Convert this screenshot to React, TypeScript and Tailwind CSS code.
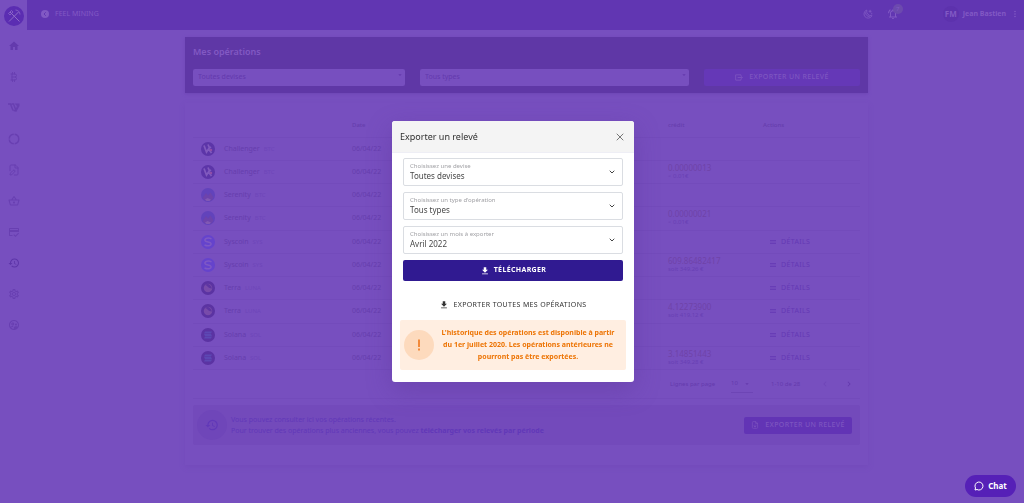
import {
  MdHome, MdOutlineShoppingBasket, MdOutlineCreditScore, MdHistory, MdOutlineSettings,
  MdMoreVert, MdOutlineNotificationsActive, MdDownload, MdMenu, MdArrowDropDown,
  MdChevronLeft, MdChevronRight, MdOutlineSupervisedUserCircle,
} from "react-icons/md";
import { TbCurrencyBitcoin } from "react-icons/tb";
import { ChevronDown, FileDown, FilePen, X } from "lucide-react";

type Coin = "challenger" | "serenity" | "syscoin" | "terra" | "solana";

type Operation = {
  coin: Coin;
  name: string;
  symbol: string;
  amount?: string;
  value?: string;
  details: boolean;
};

const operations: Operation[] = [
  { coin: "challenger", name: "Challenger", symbol: "BTC", details: false },
  { coin: "challenger", name: "Challenger", symbol: "BTC", amount: "0.00000013", value: "< 0.01€", details: false },
  { coin: "serenity", name: "Serenity", symbol: "BTC", details: false },
  { coin: "serenity", name: "Serenity", symbol: "BTC", amount: "0.00000021", value: "< 0.01€", details: false },
  { coin: "syscoin", name: "Syscoin", symbol: "SYS", details: true },
  { coin: "syscoin", name: "Syscoin", symbol: "SYS", amount: "609.86482417", value: "soit 349.26 €", details: true },
  { coin: "terra", name: "Terra", symbol: "LUNA", details: true },
  { coin: "terra", name: "Terra", symbol: "LUNA", amount: "4.12273900", value: "soit 419.12 €", details: true },
  { coin: "solana", name: "Solana", symbol: "SOL", details: true },
  { coin: "solana", name: "Solana", symbol: "SOL", amount: "3.14851443", value: "soit 349.28 €", details: true },
];

function CoinIcon({ coin }: { coin: Coin }) {
  return (
    <svg viewBox="0 0 28 28" className="size-3.5 shrink-0" aria-hidden="true">
      {coin === "challenger" && (
        <>
          <circle cx="14" cy="14" r="14" fill="#5c35a8" />
          <path d="M6 7l5 13 4-6 6 8M14 5l3 7 3-2" fill="none" stroke="#8059be" strokeWidth="3.500" />
          <circle cx="20" cy="16" r="2.500" fill="#904fa8" />
        </>
      )}
      {coin === "serenity" && (
        <>
          <circle cx="14" cy="14" r="14" fill="#6243bb" />
          <path d="M3 20l7-10 4 5 5-6 6 10-4 6H8z" fill="#6d43ac" />
          <path d="M8 23l5-3 7 3-3 3h-6z" fill="#8159b4" />
        </>
      )}
      {coin === "syscoin" && (
        <>
          <circle cx="14" cy="14" r="14" fill="#6543cc" />
          <path d="M21 8c-6-4-14-1-13 3 1 4 11 2 12 6 1 5-7 6-13 3" fill="none" stroke="#7e58c6" strokeWidth="3" />
        </>
      )}
      {coin === "terra" && (
        <>
          <circle cx="14" cy="14" r="14" fill="#5b33a2" />
          <circle cx="14" cy="14" r="8.500" fill="#784baa" />
          <path d="M8 8c5 0 4 6 14 7-3-8-8-11-14-7z" fill="#5e35a2" />
        </>
      )}
      {coin === "solana" && (
        <>
          <circle cx="14" cy="14" r="14" fill="#5b33a3" />
          <path d="M8 7h14l-2 4H6zM6 12h14l2 4H8zM8 17h14l-2 4H6z" fill="#5d48b4" />
        </>
      )}
    </svg>
  );
}

function VLogo() {
  return (
    <svg viewBox="0 0 24 18" className="h-[9px] w-3" aria-hidden="true">
      <path d="M0 2h5l5 13M7 2h4l5 13h-5" fill="none" stroke="currentColor" strokeWidth="3" />
      <path d="M13 1h10v5l-6 11h-4l5-11z" fill="currentColor" />
    </svg>
  );
}

function Ring() {
  return (
    <svg viewBox="0 0 24 24" className="size-3" fill="none" stroke="currentColor" strokeWidth="3" aria-hidden="true">
      <circle cx="12" cy="12" r="9.500" strokeDasharray="13 2" />
    </svg>
  );
}

const navItems = [
  { label: "Accueil", icon: <MdHome className="size-3 text-[#633aad]" /> },
  { label: "Bitcoin", icon: <TbCurrencyBitcoin className="size-3" /> },
  { label: "Valeurs", icon: <VLogo /> },
  { label: "Staking", icon: <Ring /> },
  { label: "Documents", icon: <FilePen className="size-3" /> },
  { label: "Boutique", icon: <MdOutlineShoppingBasket className="size-3" /> },
  { label: "Paiements", icon: <MdOutlineCreditScore className="size-3" /> },
  { label: "Historique", icon: <MdHistory className="size-3 text-[#5d35a8]" /> },
  { label: "Paramètres", icon: <MdOutlineSettings className="size-3" /> },
  { label: "Parrainage", icon: <MdOutlineSupervisedUserCircle className="size-3" /> },
];

function Sidebar() {
  return (
    <aside className="flex w-[27px] shrink-0 flex-col items-center pt-1.5">
      <a href="#" aria-label="Feel Mining" className="mb-1 size-5">
        <svg viewBox="0 0 40 40" className="size-5" fill="none" aria-hidden="true">
          <circle cx="20" cy="20" r="20" fill="#5b2db2" />
          <path d="M12 12l19 19M29 12L10 31" stroke="#8f6bc9" strokeWidth="2" />
          <path d="M9 15l6-6 3 3-6 6zM23 8c5 0 9 4 9 9" stroke="#8f6bc9" strokeWidth="1.500" />
        </svg>
      </a>
      <nav className="flex flex-col text-[#683fb1]">
        {navItems.map((item) => (
          <a key={item.label} href="#" aria-label={item.label} className="flex h-[31px] w-6 items-center justify-center">
            {item.icon}
          </a>
        ))}
      </nav>
    </aside>
  );
}

function TopBar() {
  return (
    <header className="flex h-[30px] items-center justify-between bg-[#6136b2] pb-0.5 pl-3.5 pr-1 text-[#8159c4]">
      <div className="flex items-center gap-1.5 text-[7px]">
        <svg viewBox="0 0 16 16" className="size-2" aria-hidden="true">
          <circle cx="8" cy="8" r="8" fill="#8159c4" />
          <path d="M9.500 4.500L6 8l3.500 3.500" fill="none" stroke="#6136b2" strokeWidth="2" />
        </svg>
        FEEL MINING
      </div>
      <div className="flex items-center">
        <button type="button" aria-label="Mode sombre" className="mr-3.5">
          <svg viewBox="0 0 24 24" className="size-2.5" fill="none" stroke="currentColor" strokeWidth="2" aria-hidden="true">
            <path d="M9 2.500A10 10 0 1 0 21.500 16 11 11 0 0 1 9 2.500zM6 8c0 6 4 10 10 10M17 2v7M13.500 5.500h7M21 9v4" />
          </svg>
        </button>
        <button type="button" aria-label="Notifications" className="relative mr-11">
          <MdOutlineNotificationsActive className="size-3" />
          <span className="absolute -right-1 -top-1 flex size-2.5 items-center justify-center rounded-full bg-[#6c4aae] text-[6px]">
            7
          </span>
        </button>
        <span className="flex size-4 items-center justify-center rounded-full bg-[#5d32ad] text-[8px] font-bold">FM</span>
        <span className="ml-1 text-[7px] font-bold">Jean Bastien</span>
        <MdMoreVert className="ml-1 size-2.5" />
      </div>
    </header>
  );
}

function Filter({ label, value, className }: { label: string; value: string; className: string }) {
  return (
    <div className={`flex h-[17px] rounded-xs bg-[#774fbf] pl-[5px] pr-px text-[#6339ad] ${className}`}>
      <select aria-label={label} className="w-full appearance-none text-[7px] outline-none">
        <option>{value}</option>
      </select>
      <MdArrowDropDown className="mt-0.5 size-2 shrink-0" />
    </div>
  );
}

function OperationsTable() {
  return (
    <table className="h-[257px] w-full table-fixed border-collapse text-left text-[#663ead]">
      <colgroup>
        <col className="w-[159px]" />
        <col />
        <col className="w-[95px]" />
        <col className="w-[97px]" />
      </colgroup>
      <thead>
        <tr className="h-6 text-[6px] leading-2 [&>th]:p-0 [&>th]:font-medium">
          <th />
          <th>Date</th>
          <th>crédit</th>
          <th>Actions</th>
        </tr>
      </thead>
      <tbody>
        {operations.map((op, index) => (
          <tr key={index} className="border-y border-[#734bbb]">
            <td className="p-0 pl-2">
              <div className="flex items-center">
                <CoinIcon coin={op.coin} />
                <span className="ml-[9px] text-[7px] leading-4">{op.name}</span>
                <span className="ml-1 text-[6px] leading-4 text-[#6e46b9]">{op.symbol}</span>
              </div>
            </td>
            <td className="p-0 text-[7px] leading-4">06/04/22</td>
            <td className="p-0">
              {op.amount && (
                <div className="text-[8px] leading-2 text-[#6f43a8]">
                  {op.amount}
                  <div className="text-[6px] text-[#683fb4]">{op.value}</div>
                </div>
              )}
            </td>
            <td className="p-0">
              {op.details && (
                <button type="button" className="flex items-center gap-1 pl-1.5 text-[7px] leading-4 tracking-wider text-[#6439b4]">
                  <MdMenu className="size-2" />
                  DÉTAILS
                </button>
              )}
            </td>
          </tr>
        ))}
      </tbody>
    </table>
  );
}

function Pagination() {
  return (
    <div className="flex h-[29px] items-center justify-end border-b border-[#734bbb] pr-1.5 text-[6px] text-[#643aad]">
      <label htmlFor="page-size" className="w-[61px]">Lignes par page</label>
      <div className="flex w-[22px] items-center border-b border-[#6d45b5] py-1">
        <select id="page-size" className="w-3 appearance-none outline-none">
          <option>10</option>
        </select>
        <MdArrowDropDown className="size-2" />
      </div>
      <span className="ml-[18px] w-[49px]">1-10 de 28</span>
      <button type="button" aria-label="Page précédente" className="text-[#6f47b8]">
        <MdChevronLeft className="size-2.5" />
      </button>
      <button type="button" aria-label="Page suivante" className="ml-3.5">
        <MdChevronRight className="size-2.5" />
      </button>
    </div>
  );
}

function Page() {
  return (
    <div className="flex min-h-screen bg-[#774fbf]">
      <Sidebar />
      <div className="min-w-0 flex-1">
        <TopBar />
        <div className="pl-0.5">
          <main className="mx-auto mt-[7px] max-w-[683px]">
            <section className="bg-[#5f37a6] px-2 pb-[7px] pt-2 shadow-sm shadow-[#6f47b6]">
              <h1 className="text-[9px] font-semibold leading-[14px] text-[#8259c3]">Mes opérations</h1>
              <div className="mt-2.5 flex gap-[15px]">
                <Filter label="Devises" value="Toutes devises" className="w-[212px]" />
                <Filter label="Types" value="Tous types" className="flex-1" />
                <button type="button" className="flex h-[17px] w-[156px] items-center justify-center gap-1.5 rounded-xs bg-[#6538b7] text-[7px] font-medium tracking-wider text-[#7e56c1]">
                  <svg viewBox="0 0 24 20" className="h-[7px] w-2" fill="none" stroke="currentColor" strokeWidth="2.500" aria-hidden="true">
                    <path d="M18 6V2H2v16h16v-4M8 10h14M18 6l4 4-4 4" />
                  </svg>
                  EXPORTER UN RELEVÉ
                </button>
              </div>
            </section>
            <section className="mt-2.5 px-2 pb-5 pt-2.5 shadow-[0_2px_4px_#734bbb]">
              <OperationsTable />
              <Pagination />
              <div className="mt-1.5 flex items-center rounded-xs bg-[#734abb] py-[5px] pl-1 pr-2 text-[#6138b8]">
                <span className="flex size-[30px] items-center justify-center rounded-full bg-[#6f46b9]">
                  <MdHistory className="size-3.5" />
                </span>
                <p className="ml-1 flex-1 text-[7px] leading-[11px]">
                  Vous pouvez consulter ici vos opérations récentes.
                  <br />
                  Pour trouver des opérations plus anciennes, vous pouvez{" "}
                  <a href="#" className="font-bold">télécharger vos relevés par période</a>
                </p>
                <button type="button" className="flex h-[17px] w-[108px] items-center justify-center gap-1.5 rounded-xs bg-[#6234b5] text-[7px] font-medium tracking-wider text-[#7d55c0]">
                  <FileDown className="size-2" />
                  EXPORTER UN RELEVÉ
                </button>
              </div>
            </section>
          </main>
        </div>
      </div>
    </div>
  );
}

function Field({ id, label, value }: { id: string; label: string; value: string }) {
  return (
    <div className="flex h-7 items-center rounded-xs border border-[#dadde2] px-1.5">
      <div className="flex-1">
        <label htmlFor={id} className="block text-[6px] leading-2 text-[#a1a1a5]">{label}</label>
        <select id={id} className="block h-3 w-full appearance-none text-[8px] leading-3 text-[#484848] outline-none">
          <option>{value}</option>
        </select>
      </div>
      <ChevronDown className="size-2 text-[#444]" strokeWidth={3} />
    </div>
  );
}

function ExportDialog() {
  return (
    <div className="fixed inset-0 flex items-center justify-center pl-0.5">
      <div
        role="dialog"
        aria-modal="true"
        aria-labelledby="export-title"
        className="w-[242px] overflow-hidden rounded-[3px] bg-white shadow-[0_8px_24px_#5c359866]"
      >
        <div className="flex h-8 items-center justify-between border-b border-[#eeeef5] bg-[#f4f4f4] px-2">
          <h2 id="export-title" className="text-[9px] leading-3 text-[#2f2f2f]">Exporter un relevé</h2>
          <button type="button" aria-label="Fermer">
            <X className="size-3 text-[#777]" strokeWidth={2} />
          </button>
        </div>
        <div className="flex flex-col gap-1.5 px-[11px] pt-[5px]">
          <Field id="currency" label="Choisissez une devise" value="Toutes devises" />
          <Field id="type" label="Choisissez un type d'opération" value="Tous types" />
          <Field id="month" label="Choisissez un mois à exporter" value="Avril 2022" />
          <button type="button" className="flex h-[21px] items-center justify-center gap-1 rounded-xs bg-[#301a91] text-[7px] font-bold tracking-wider text-white">
            <MdDownload className="size-2.5" />
            TÉLÉCHARGER
          </button>
        </div>
        <button type="button" className="mx-auto mt-4 flex h-4 items-center gap-1 text-[7px] tracking-wider text-[#333]">
          <MdDownload className="size-2.5" />
          EXPORTER TOUTES MES OPÉRATIONS
        </button>
        <div className="mx-2 mb-3 mt-[7px] flex h-[50px] items-center rounded-xs bg-[#ffeee1] px-1">
          <span className="flex size-[30px] shrink-0 items-center justify-center rounded-full bg-[#fddabd]">
            <svg viewBox="0 0 4 22" className="h-3 w-0.5" fill="#f28a3b" aria-hidden="true">
              <path d="M0 0h4v15H0zM0 18h4v4H0z" />
            </svg>
          </span>
          <p className="flex-1 text-center text-[7px] font-bold leading-[12px] text-[#ed7404]">
            L'historique des opérations est disponible à partir
            <br />
            du 1er juillet 2020. Les opérations antérieures ne
            <br />
            pourront pas être exportées.
          </p>
        </div>
      </div>
    </div>
  );
}

export default function App() {
  return (
    <div className="font-['Noto_Sans',sans-serif]">
      <Page />
      <ExportDialog />
      <button type="button" className="fixed bottom-1.5 right-2 flex h-[22px] w-[51px] items-center justify-center gap-1 rounded-full bg-[#5620b7] text-[8px] font-bold text-white">
        <svg viewBox="0 0 20 20" className="size-2.5" fill="none" stroke="currentColor" strokeWidth="2" aria-hidden="true">
          <path d="M2 18l1-4a8 8 0 1 1 3 3z" />
        </svg>
        Chat
      </button>
    </div>
  );
}
